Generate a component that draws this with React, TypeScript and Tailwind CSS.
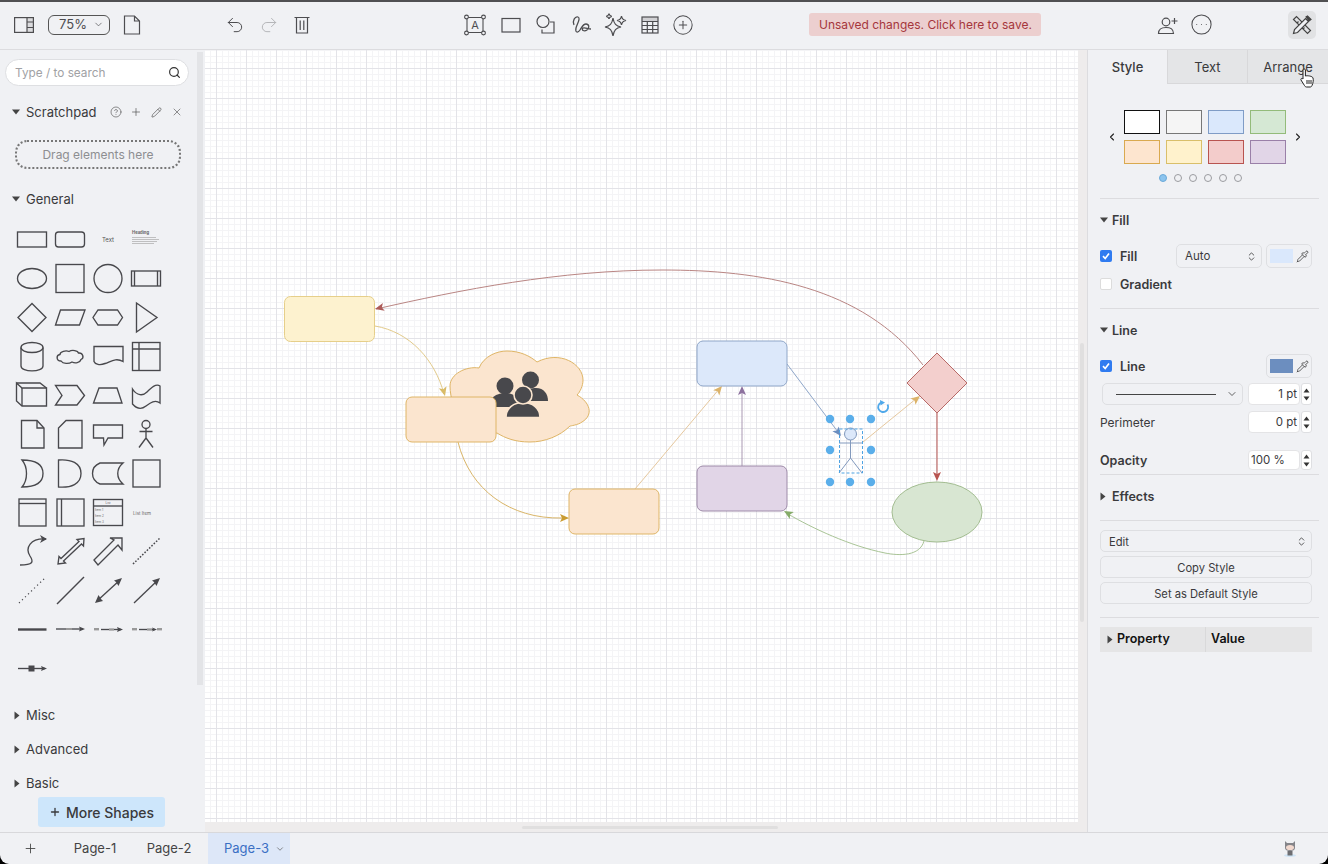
// App.tsx - diagram editor screen
import React from 'react'
import { ChevronDown, ChevronLeft, ChevronRight, ChevronsUpDown, CircleEllipsis, CircleHelp, CirclePlus, Pencil, Pipette, Plus, Redo2, Search, Undo2, X } from 'lucide-react'

const INK = '#48484c'

const TriDown = () => (
  <svg width="8" height="6" viewBox="0 0 8 6" className="shrink-0"><polygon points="0,0.5 8,0.5 4,5.5" fill="#444" /></svg>
)
const TriRight = () => (
  <svg width="6" height="9" viewBox="0 0 6 9" className="shrink-0"><polygon points="0.5,0.5 5.5,4.5 0.5,8.5" fill="#444" /></svg>
)

const Check = ({ on }: { on: boolean }) =>
  on ? (
    <div className="w-3 h-3 rounded-[2px] bg-[#2f7bf0] flex items-center justify-center">
      <svg width="10" height="10" viewBox="0 0 10 10"><path d="M2 5.2 L4.2 7.5 L8 2.6" fill="none" stroke="#fff" strokeWidth="1.7" /></svg>
    </div>
  ) : (
    <div className="w-3 h-3 rounded-[2px] bg-white border border-[#dcdcdc]" />
  )

const Stepper = () => (
  <div className="w-[11px] h-full ml-px border border-[#dedfe2] rounded-[3px] bg-white flex flex-col items-center justify-center gap-[3px]">
    <svg width="7" height="5" viewBox="0 0 7 5"><polygon points="3.5,0.5 6.5,4.5 0.5,4.5" fill="#333" /></svg>
    <svg width="7" height="5" viewBox="0 0 7 5"><polygon points="0.5,0.5 6.5,0.5 3.5,4.5" fill="#333" /></svg>
  </div>
)

const ColorBox = ({ color }: { color: string }) => (
  <div className="w-[46px] h-6 border border-[#dedfe2] rounded-[5px] flex items-center pl-[3px] gap-[3px]">
    <div className="w-[23px] h-[14px]" style={{ background: color }} />
    <Pipette size={13} strokeWidth={1.4} color="#333" />
  </div>
)

const Header = ({ label }: { label: string }) => (
  <div className="h-[22px] flex items-center gap-1 text-[12.5px] font-semibold text-[#3a3a3c]">
    <TriDown />
    <span className="pt-[2px]">{label}</span>
  </div>
)

const SideSection = ({ label }: { label: string }) => (
  <div className="h-[22px] flex items-center pl-[14px] gap-[6px] text-[13px] text-[#3a3a3c]">
    <TriRight />
    <span className="pt-[2px]">{label}</span>
  </div>
)

// palette tiles, 38x39 each, centred on 19,19.5
const tiles: React.ReactNode[] = [
  <rect x="4.5" y="12" width="29" height="15" />,
  <rect x="4.5" y="12" width="29" height="15" rx="3" />,
  <text x="19" y="21.5" textAnchor="middle" fontSize="6" fill="#555" stroke="none">Text</text>,
  <g stroke="none" fill="#aaa">
    <text x="5" y="14" fontSize="4.2" fontWeight="700" fill="#666">Heading</text>
    <rect x="5" y="17" width="24" height="0.7" /><rect x="5" y="19" width="27" height="0.7" /><rect x="5" y="21" width="25" height="0.7" /><rect x="5" y="23" width="22" height="0.7" />
  </g>,
  <ellipse cx="19" cy="19.5" rx="14.5" ry="10" />,
  <rect x="5" y="5.5" width="28" height="28" />,
  <circle cx="19" cy="19.5" r="14" />,
  <g><rect x="4.5" y="12" width="29" height="15" /><path d="M7.5 12 V27 M30.5 12 V27" /></g>,
  <path d="M19 5.5 L33 19.5 L19 33.5 L5 19.5 Z" />,
  <path d="M9.5 12 H34 L28.5 27 H4.5 Z" />,
  <path d="M9 12 H28.5 L33.5 19.5 L28.5 27 H9 L4 19.5 Z" />,
  <path d="M9.5 5 L30 19.5 L9.5 34 Z" />,
  <g><path d="M8 10.5 V29 C8 35.5 30 35.5 30 29 V10.5" /><ellipse cx="19" cy="10.5" rx="11" ry="5" /></g>,
  <path d="M10 25 C5 25 5 19 9 18.5 C9 15.5 15 14 18 15.5 C21 13.5 27 14.5 27.5 17 C32 16.5 33.5 22 30 23.5 C29 27 24 27.5 21 26 C18 28 12 28 10 25 Z" transform="translate(0,-1)" />,
  <path d="M5 13 H34 V28 C27 24 22 28 16 30 C11 32 6 31 5 28 Z" transform="translate(0,-3.5)" />,
  <g><rect x="5.5" y="5.5" width="27.5" height="28" /><path d="M5.5 12 H33 M12 5.5 V33.5" /></g>,
  <g><path d="M3.5 10 L9 15 H33.5 V33 H9 L3.5 28 Z" transform="translate(0,-3)" /><path d="M9 12 V30 M3.5 7 H27 L33.5 12" /></g>,
  <path d="M4.5 9.5 H26 L33.5 19.5 L26 29 H4.5 L11 19.5 Z" />,
  <path d="M10 12 H28 L33 27 H4.5 Z" />,
  <path d="M5.5 14 C10 21 16 21 20 17 C24 13 29 8 33 11 V28 C28 24 23 28 19 31 C14 35 9 33 5.5 29 Z" transform="translate(0,-1)" />,
  <g><path d="M8.5 5.5 H24 L31 13 V33 H8.5 Z" /><path d="M24 5.5 V13 H31" /></g>,
  <path d="M15 5.5 H31 V33 H7.5 V13 Z" />,
  <path d="M4.5 10 H33.5 V23 H19 L15 30 L14.5 23 H4.5 Z" />,
  <g><circle cx="19" cy="9.5" r="4" /><path d="M19 13.5 V23 M12.5 16.5 H25.5 M19 23 L12 32.5 M19 23 L26 32.5" /></g>,
  <path d="M9 6 C20 6 30 9 30 19.5 C30 30 20 33 9 33 C15 26 15 13 9 6 Z" />,
  <path d="M7.5 6 V33 C20 34 30 30 30 19.5 C30 9 20 5 7.5 6 Z" />,
  <path d="M11 9 H34 C27 15 27 24 34 30 H11 C1 26 1 13 11 9 Z" />,
  <rect x="6" y="6" width="27" height="27" />,
  <g><rect x="6" y="6" width="27" height="27" /><path d="M6 10.5 H33" /></g>,
  <g><rect x="6" y="6" width="27" height="27" /><path d="M10.5 6 V33" /></g>,
  <g>
    <rect x="4.5" y="6.5" width="29" height="26" /><path d="M4.5 13 H33.5" />
    <g stroke="none" fill="#666" fontSize="3"><text x="19" y="11" textAnchor="middle">List</text><text x="6" y="18">Item 1</text><text x="6" y="24">Item 2</text><text x="6" y="30">Item 3</text></g>
  </g>,
  <text x="6" y="22" fontSize="4.5" fill="#666" stroke="none">List Item</text>,
  <g><path d="M7 33 C20 33 21 30 17 24 C12 16 17 6 33 7" /><polygon points="34,7 27,3 29,7 27,11" fill={INK} stroke="none" /></g>,
  <path d="M7 32 L8 24.5 L10 26.5 L28 9.5 L26 7.5 L33 6.5 L32.5 14 L30.5 12 L12.5 29 L14.5 31 Z" />,
  <path d="M5 28 L25 8 L21 6 L33 6 L33 18 L29 13 L9 33 Z" />,
  <path d="M6 32 L33 6" strokeDasharray="1.6 1.6" strokeWidth="1.5" />,
  <path d="M6 32 L33 6" strokeDasharray="1.2 3" strokeWidth="1.2" />,
  <path d="M6 33 L33 6" />,
  <g><path d="M8 30 L31 9" /><polygon points="33,7 29.5,15 27,11 25,9.5" fill={INK} stroke="none" /><polygon points="6,32 9.5,24 12,28 14,30" fill={INK} stroke="none" /></g>,
  <g><path d="M7 32 L31 9" /><polygon points="33,7 29.5,15 27,11 25,9.5" fill={INK} stroke="none" /></g>,
  <path d="M5 19.5 H33.5" strokeWidth="2.4" />,
  <g><path d="M5 19 H32" /><polygon points="34,19 28,16.5 29,19 28,21.5" fill={INK} stroke="none" /><rect x="15" y="18" width="6" height="2" fill="#999" stroke="none" /></g>,
  <g><path d="M12 19.5 H32" /><polygon points="34,19.5 28,17 29,19.5 28,22" fill={INK} stroke="none" /><rect x="5" y="18" width="5" height="2.4" fill="#999" stroke="none" /><rect x="20" y="18.5" width="5" height="2" fill="#999" stroke="none" /></g>,
  <g><path d="M12 19.5 H28" /><polygon points="30,19.5 25,17.5 26,19.5 25,21.5" fill={INK} stroke="none" /><rect x="5" y="18" width="5" height="2.4" fill="#999" stroke="none" /><rect x="20" y="18.5" width="5" height="2" fill="#999" stroke="none" /><rect x="30" y="18" width="5" height="2.4" fill="#999" stroke="none" /></g>,
  <g><path d="M5 19.5 H32" /><polygon points="34,19.5 28,17 29,19.5 28,22" fill={INK} stroke="none" /><rect x="15.5" y="16.5" width="6" height="6" fill={INK} stroke="none" /></g>,
]

// block arrow head with a notch, tip at x,y pointing along angle (degrees)
const Head = ({ x, y, a, c }: { x: number; y: number; a: number; c: string }) => (
  <polygon points="0,0 -9,-4 -7,0 -9,4" fill={c} transform={`translate(${x} ${y}) rotate(${a})`} />
)

const handles: [number, number][] = [[830, 419], [850, 419], [871, 419], [830, 450], [871, 450], [830, 482], [850, 482], [871, 482]]

const Diagram = () => (
  <svg viewBox="205 50 873 772" className="w-full h-full block" fill="none">
    {/* edges */}
    <path d="M923 365 C862 286 760 270 662 270 C560 270 460 290 376 309" stroke="#b98583" />
    <Head x={375} y={309} a={167} c="#ad5b59" />
    <path d="M375 326 C410 332 435 360 444 394" stroke="#e2ca8a" />
    <Head x={445} y={396} a={75} c="#d9bb68" />
    <path d="M458 442 C470 490 510 519 562 518" stroke="#d9b568" />
    <Head x={569} y={518} a={0} c="#c99b30" />
    <path d="M635 489 L720 388" stroke="#e6c89e" />
    <Head x={722} y={386} a={-50} c="#dcb36a" />
    <path d="M742 466 V390" stroke="#a998b2" />
    <Head x={742} y={386} a={-90} c="#8d719e" />
    <path d="M787 364 L838 432" stroke="#8ea6c9" />
    <Head x={841} y={436} a={53} c="#6c8ebf" />
    <path d="M863 442 L917 398" stroke="#e6c89e" />
    <Head x={920} y={396} a={-39} c="#dcb36a" />
    <path d="M937 413 V476" stroke="#b85450" />
    <Head x={937} y={481} a={90} c="#b85450" />
    <path d="M924 541 C920 556 900 556 885 553 C850 546 812 528 788 514" stroke="#a9c496" />
    <Head x={784} y={511} a={-150} c="#85ab69" />

    {/* nodes */}
    <rect x="284.5" y="296.5" width="90" height="45" rx="6" fill="#fdf2cf" stroke="#e6cf8a" />
    <path d="M450 386 C450 374 466 366 479 368 C484 356 497 351 507 351 C520 351 530 356 537 362 C560 350 583 364 583 380 C583 386 580 392 577 395 C590 402 594 415 582 422 C578 425 570 426 570 426 C560 436 545 442 530 442 C515 442 505 438 497 433 C470 440 450 410 450 386 Z" fill="#fbe5cf" stroke="#dfb566" />
    <g fill={INK}>
      <circle cx="530.5" cy="380" r="8.5" />
      <path d="M516 401 C516 392 528 388 536 388 C544 388 548 394 548 401 Z" />
      <circle cx="505" cy="386" r="8.5" />
      <path d="M488 407 C488 398 497 393 505 393 C513 393 522 398 522 407 Z" />
      <g stroke="#fbe5cf" strokeWidth="1.6">
        <path d="M506 417.5 C506 408 514 402.5 523 402.5 C532 402.5 540 408 540 417.5 Z" />
        <circle cx="523" cy="395" r="9" />
      </g>
    </g>
    <rect x="406" y="397" width="90" height="45" rx="6" fill="#fbe5cf" stroke="#dfb566" />
    <rect x="569" y="489" width="90" height="45" rx="6" fill="#fbe5cf" stroke="#dfb566" />
    <rect x="697" y="341" width="90" height="45" rx="6" fill="#dce8fa" stroke="#8fa6c8" />
    <rect x="697" y="466" width="90" height="45" rx="6" fill="#e1d5e7" stroke="#9d8aa8" />
    <path d="M937 353 L967 383 L937 413 L907 383 Z" fill="#f3cfcd" stroke="#b86a67" />
    <ellipse cx="937" cy="512" rx="45" ry="30" fill="#d8e6d2" stroke="#a3bd91" />

    {/* selected actor */}
    <g stroke="#8299bd">
      <circle cx="850.5" cy="434" r="6" fill="#dce8fa" />
      <path d="M850.5 440 V458 M839 443 H863 M850.5 458 L839 473 M850.5 458 L862 473" />
    </g>
    <rect x="839.5" y="429" width="23" height="44" stroke="#4fa3e3" strokeDasharray="3 2" />
    {handles.map(([x, y]) => (
      <circle key={`${x}-${y}`} cx={x} cy={y} r="4.2" fill="#5aaeea" />
    ))}
    <path d="M887.5 404.5 A5 5 0 1 1 881 402.5" stroke="#4fa8ea" strokeWidth="1.8" />
    <polygon points="880,400 885,402.5 880.5,405.5" fill="#4fa8ea" />
  </svg>
)

const swatches = [
  ['#ffffff', '#111111'], ['#f5f5f5', '#777777'], ['#dae8fc', '#7f9cc6'], ['#d5e8d4', '#93bb7a'],
  ['#fde5cf', '#d9a94f'], ['#fff2cc', '#d9bf6a'], ['#f3cccb', '#b85450'], ['#e1d5e7', '#9a80a8'],
]

const Toolbar = () => (
  <div className="h-12 shrink-0 flex items-center pl-[14px] pb-[2px] border-b border-[#dcdcdf] text-[#4d4d50]">
    <svg width="20" height="16" viewBox="0 0 20 16" fill="none" stroke="#4d4d50" strokeWidth="1.2">
      <rect x="0.6" y="0.6" width="18.8" height="14.8" /><path d="M13 0.6 V15.4 M13 5 H19.4 M13 10.5 H19.4" />
      <rect x="13" y="0.6" width="6.4" height="14.8" fill="#55555522" stroke="none" />
    </svg>
    <div className="ml-[14px] w-[62px] h-5 border border-[#555] rounded-[6px] flex items-center pl-[10px] gap-[6px] text-[13px]">
      <span>75%</span>
      <ChevronDown size={11} strokeWidth={1.5} />
    </div>
    <svg className="ml-[13px]" width="18" height="20" viewBox="0 0 18 20" fill="none" stroke="#4d4d50" strokeWidth="1.2">
      <path d="M1.5 1 H11.5 L16.5 6 V19 H1.5 Z M11.5 1 V6 H16.5" />
    </svg>
    <Undo2 className="ml-[84px]" size={20} strokeWidth={1.2} />
    <Redo2 className="ml-[14px]" size={20} strokeWidth={1.2} color="#b5b6b9" />
    <svg className="ml-[15px]" width="16" height="18" viewBox="0 0 16 18" fill="none" stroke="#4d4d50" strokeWidth="1.2">
      <path d="M0.5 1.5 H15.5 M2.5 1.5 V17 H13.5 V1.5 M6.2 4.5 V14 M9.8 4.5 V14" />
    </svg>
    <div className="ml-[153px] flex items-center gap-[10.5px]">
      <svg width="24" height="24" viewBox="0 0 24 24" fill="none" stroke="#4d4d50" strokeWidth="1.1">
        <path d="M4 4.5 H20 M4 19.5 H20 M4 4.5 V19.5 M20 4.5 V19.5" />
        {[[3.5, 4], [20.5, 4], [3.5, 20], [20.5, 20]].map(([x, y]) => <circle key={`${x}${y}`} cx={x} cy={y} r="1.9" fill="#f0f1f4" />)}
        <text x="12" y="16" textAnchor="middle" fontSize="11" fill="#4d4d50" stroke="none">A</text>
      </svg>
      <svg className="ml-px" width="24" height="24" viewBox="0 0 24 24" fill="none" stroke="#4d4d50" strokeWidth="1.2"><rect x="3" y="5.5" width="18" height="13.5" /></svg>
      <svg className="ml-px" width="24" height="24" viewBox="0 0 24 24" fill="none" stroke="#4d4d50" strokeWidth="1.2">
        <circle cx="9" cy="8.5" r="6" /><path d="M16 9 H20 V20 H8 V16.5" />
      </svg>
      <svg width="24" height="24" viewBox="0 0 24 24" fill="none" stroke="#4d4d50" strokeWidth="1.3">
        <path d="M5 12 C3 8 6 3 9 4 C12 5 8 11 7 15 C6 20 9 20 11 17 C13 14 14 11 17 11 C20 11 21 15 18 17 C15 19 12 17 14 15 C16 14 19 16 22 16" />
      </svg>
      <svg width="24" height="24" viewBox="0 0 24 24" fill="none" stroke="#4d4d50" strokeWidth="1.2">
        <path d="M10 7 C11 13 13 15 18 16 C13 17 11 19 10 25 C9 19 7 17 2 16 C7 15 9 13 10 7 Z" transform="translate(0,-2)" />
        <path d="M18.5 3 C19 6 20 7 23 7.5 C20 8 19 9 18.5 12 C18 9 17 8 14 7.5 C17 7 18 6 18.5 3 Z" />
        <path d="M6 0.5 C6.3 2.3 7 3 8.8 3.3 C7 3.6 6.3 4.3 6 6 C5.7 4.3 5 3.6 3.2 3.3 C5 3 5.7 2.3 6 0.5 Z" />
      </svg>
      <svg width="24" height="24" viewBox="0 0 24 24" fill="none" stroke="#4d4d50" strokeWidth="1.2">
        <rect x="4" y="4" width="16" height="16" /><path d="M4 8.5 H20 M4 12.5 H20 M4 16.5 H20 M9.3 8.5 V20 M14.7 8.5 V20" /><rect x="4" y="4" width="16" height="4.5" fill="#55555533" stroke="none" />
      </svg>
      <CirclePlus size={22} strokeWidth={1.1} />
    </div>
    <div className="ml-[115px] w-[232px] h-[23px] bg-[#eccfcf] rounded-[3px] flex items-center pl-[10px] text-[12px] text-[#a5363c] whitespace-nowrap">
      Unsaved changes. Click here to save.
    </div>
    <svg className="ml-[115px]" width="24" height="24" viewBox="0 0 24 24" fill="none" stroke="#4d4d50" strokeWidth="1.2">
      <circle cx="10" cy="9" r="3.8" /><path d="M2.5 20.5 C2.5 16 6 14.5 10 14.5 C14 14.5 17.5 16 17.5 20.5 Z M18.5 5 V11 M15.5 8 H21.5" />
    </svg>
    <CircleEllipsis className="ml-[10px]" size={23} strokeWidth={1.1} />
    <div className="ml-[75px] w-7 h-7 rounded-[5px] bg-[#e1e2e4] flex items-center justify-center">
      <svg width="20" height="20" viewBox="0 0 20 20" fill="none" stroke="#444" strokeWidth="1.2">
        <path d="M1.5 4.5 L4.5 1.5 L18.5 15.5 L15.5 18.5 Z M5 8 L6.5 6.5 M8 11 L9.5 9.5 M11 14 L12.5 12.5" />
        <path d="M1.5 18.5 L2.5 14.5 L13.5 3.5 L16.5 6.5 L5.5 17.5 Z" fill="#f0f1f4" />
        <path d="M14 2 L15.5 1 L19 4.5 L17 6 Z" fill="#444" />
      </svg>
    </div>
  </div>
)

const Sidebar = () => (
  <div className="relative w-[205px] shrink-0 flex flex-col">
    <div className="absolute left-[197px] top-[2px] w-[6px] h-[633px] bg-[#e3e4e7]" />
    <div className="mt-[9px] ml-[5px] w-[184px] h-[27px] bg-white border border-[#dedfe2] rounded-full flex items-center justify-between pl-[9px] pr-[7px] text-[11.8px] text-[#a0a1a4]">
      <span className="pt-[2px]">Type / to search</span>
      <Search size={13} strokeWidth={2.2} color="#333" />
    </div>
    <div className="mt-[15px] h-[22px] flex items-center pl-[12px] text-[13px] text-[#3a3a3c]">
      <TriDown />
      <span className="ml-[6px] pt-[2px]">Scratchpad</span>
      <CircleHelp className="ml-[13px]" size={12} strokeWidth={1.3} color="#555" />
      <Plus className="ml-[8px]" size={12} strokeWidth={1.4} color="#555" />
      <Pencil className="ml-[9px]" size={11} strokeWidth={1.5} color="#555" />
      <X className="ml-[9px]" size={12} strokeWidth={1.3} color="#555" />
    </div>
    <div className="mt-[17px] ml-[15px] w-[166px] h-[29px] border-2 border-dotted border-[#777] rounded-[12px] flex items-center justify-center text-[12px] text-[#8d8e91]">
      <span className="pt-px">Drag elements here</span>
    </div>
    <div className="mt-[19px] h-[22px] flex items-center pl-[12px] gap-[6px] text-[13px] text-[#3a3a3c]">
      <TriDown />
      <span className="pt-[2px]">General</span>
    </div>
    <div className="mt-[10px] ml-[13px] grid grid-cols-[repeat(4,38px)] auto-rows-[39px]">
      {tiles.map((t, i) => (
        <svg key={i} width="38" height="39" viewBox="0 0 38 39" fill="none" stroke={INK} strokeWidth="1.35">{t}</svg>
      ))}
    </div>
    <div className="mt-4 flex flex-col gap-3">
      <SideSection label="Misc" />
      <SideSection label="Advanced" />
      <SideSection label="Basic" />
    </div>
    <div className="mt-[3px] ml-[38px] w-[127px] h-[30px] bg-[#cde6fb] rounded-[3px] flex items-center justify-center gap-[5px] text-[14px] font-medium text-[#3a3a3c]">
      <Plus size={12} strokeWidth={2.6} />
      <span>More Shapes</span>
    </div>
  </div>
)

const Canvas = () => (
  <div className="flex-1 min-w-0 flex flex-col bg-[#eeecec]">
    <div className="flex-1 min-h-0 flex">
      <div className="w-[873px] bg-white bg-[linear-gradient(#e3e3e8_1px,transparent_1px),linear-gradient(90deg,#e3e3e8_1px,transparent_1px),linear-gradient(#f4f4f6_1px,transparent_1px),linear-gradient(90deg,#f4f4f6_1px,transparent_1px)] bg-[size:30px_30px,30px_30px,6px_6px,6px_6px] bg-[position:11px_18px,11px_18px,5px_0px,5px_0px]">
        <Diagram />
      </div>
      <div className="flex-1 pt-[293px] pl-[2px]">
        <div className="w-[4px] h-[279px] bg-[#e0dfdf] rounded-full" />
      </div>
    </div>
    <div className="h-[10px] shrink-0 flex items-center pl-[317px]">
      <div className="w-[256px] h-[3px] bg-[#e0dfdf] rounded-full" />
    </div>
  </div>
)

const Panel = () => (
  <div className="w-[241px] shrink-0 border-l border-[#dcdcdf] flex flex-col text-[#3a3a3c]">
    <div className="h-[34px] flex text-[13px]">
      <div className="w-[79px] flex items-center justify-center font-medium pt-[2px]">Style</div>
      <div className="w-[80px] flex items-center justify-center bg-[#e4e5e7] border-l border-b border-[#d8d8da] pt-[2px]">Text</div>
      <div className="flex-1 flex items-center justify-center bg-[#e4e5e7] border-l border-b border-[#d8d8da] pt-[2px]">Arrange</div>
    </div>
    <div className="ml-3 mr-[9px] h-[115px] border-b border-[#dcdcdf]">
      <div className="pt-[26px] pl-[6px] flex items-center">
        <ChevronLeft size={12} strokeWidth={2.2} color="#222" />
        <div className="ml-[6px] grid grid-cols-[repeat(4,36px)] gap-x-[6px] gap-y-[6px]">
          {swatches.map(([bg, line]) => (
            <div key={bg} className="h-6 border" style={{ background: bg, borderColor: line }} />
          ))}
        </div>
        <ChevronRight className="ml-[6px]" size={12} strokeWidth={2.2} color="#222" />
      </div>
      <div className="mt-[10px] ml-[59px] flex gap-[7px]">
        <div className="w-2 h-2 rounded-full bg-[#8cc4ee] border border-[#6aa9d8]" />
        {[1, 2, 3, 4, 5].map((i) => (
          <div key={i} className="w-2 h-2 rounded-full border border-[#9b9ca0]" />
        ))}
      </div>
    </div>
    {/* Fill */}
    <div className="ml-3 mr-[9px] pr-[7px] h-[110px] border-b border-[#dcdcdf] pt-[10px]">
      <Header label="Fill" />
      <div className="mt-[13px] h-6 flex items-center text-[12.5px] font-semibold">
        <Check on />
        <span className="ml-2 w-[56px] pt-[2px]">Fill</span>
        <div className="w-[86px] h-6 border border-[#dedfe2] rounded-[5px] flex items-center justify-between pl-2 pr-1 font-normal text-[11.5px]">
          <span className="pt-[2px]">Auto</span>
          <ChevronsUpDown size={11} strokeWidth={1.6} color="#222" />
        </div>
        <div className="ml-1"><ColorBox color="#dae8fc" /></div>
      </div>
      <div className="mt-2 h-4 flex items-center text-[12.5px] font-semibold">
        <Check on={false} />
        <span className="ml-2 pt-[2px]">Gradient</span>
      </div>
    </div>
    {/* Line */}
    <div className="ml-3 mr-[9px] pr-[7px] h-[166px] border-b border-[#dcdcdf] pt-[10px]">
      <Header label="Line" />
      <div className="mt-[13px] h-6 flex items-center justify-between text-[12.5px] font-semibold">
        <div className="flex items-center">
          <Check on />
          <span className="ml-2 pt-[2px]">Line</span>
        </div>
        <ColorBox color="#6c8ebf" />
      </div>
      <div className="mt-[5px] h-[22px] flex items-center">
        <div className="ml-[2px] w-[141px] h-[22px] border border-[#dedfe2] rounded-[5px] flex items-center pl-[13px] pr-[4px] justify-between">
          <div className="w-[100px] h-px bg-[#444]" />
          <ChevronDown size={12} strokeWidth={1.5} color="#333" />
        </div>
        <div className="ml-[5px] w-[52px] h-[22px] bg-white border border-[#e4e4e6] rounded-[4px] flex items-center justify-end pr-[2px] pt-[2px] text-[11.5px]">1 pt</div>
        <Stepper />
      </div>
      <div className="mt-[6px] h-[22px] flex items-center justify-between">
        <span className="text-[12px] pt-[2px]">Perimeter</span>
        <div className="flex h-full">
          <div className="w-[52px] bg-white border border-[#e4e4e6] rounded-[4px] flex items-center justify-end pr-[2px] pt-[2px] text-[11.5px]">0 pt</div>
          <Stepper />
        </div>
      </div>
      <div className="mt-[17px] h-5 flex items-center justify-between">
        <span className="text-[12.5px] font-semibold pt-[2px]">Opacity</span>
        <div className="flex h-full">
          <div className="w-[52px] bg-white border border-[#e4e4e6] rounded-[4px] flex items-center pl-[2px] pt-[2px] text-[11.5px]">100 %</div>
          <Stepper />
        </div>
      </div>
    </div>
    {/* Effects */}
    <div className="ml-3 mr-[9px] h-[46px] border-b border-[#dcdcdf] pt-[10px]">
      <div className="h-[22px] flex items-center gap-[6px] text-[12.5px] font-semibold">
        <TriRight />
        <span className="pt-[2px]">Effects</span>
      </div>
    </div>
    {/* Style actions */}
    <div className="ml-3 mr-[9px] pr-[7px] h-[97px] border-b border-[#dcdcdf] pt-[9px] flex flex-col gap-1 text-[11.2px]">
      <div className="h-[22px] border border-[#dedfe2] rounded-[5px] flex items-center justify-between pl-2 pr-1">
        <span className="pt-[2px]">Edit</span>
        <ChevronsUpDown size={11} strokeWidth={1.6} color="#222" />
      </div>
      <div className="h-[22px] border border-[#dedfe2] rounded-[5px] flex items-center justify-center pt-[2px]">Copy Style</div>
      <div className="h-[22px] border border-[#dedfe2] rounded-[5px] flex items-center justify-center pt-[2px]">Set as Default Style</div>
    </div>
    <div className="mt-[9px] ml-3 w-[212px] h-[25px] bg-[#e5e5e6] flex items-center text-[12.5px] font-semibold text-[#111]">
      <div className="w-[106px] h-full flex items-center pl-[7px] gap-1 border-r border-[#d9d9da]">
        <TriRight />
        <span>Property</span>
      </div>
      <span className="ml-[5px]">Value</span>
    </div>
  </div>
)

const TabBar = () => (
  <div className="h-8 shrink-0 border-t border-[#d8d8db] flex items-stretch text-[13px] text-[#444]">
    <div className="w-[60px] flex items-center justify-center"><Plus size={15} strokeWidth={1.4} /></div>
    <div className="w-[70px] flex items-center justify-center">Page-1</div>
    <div className="w-[78px] flex items-center justify-center">Page-2</div>
    <div className="w-[82px] bg-[#dde7f8] text-[#3a6fc4] flex items-center pl-[16px] gap-[6px]">
      <span>Page-3</span>
      <ChevronDown size={10} strokeWidth={1.6} color="#555" />
    </div>
    <div className="ml-auto mr-[30px] flex items-center">
      <svg width="16" height="18" viewBox="0 0 16 18">
        <ellipse cx="8" cy="15.5" rx="6" ry="1.5" fill="#cfe4f5" />
        <path d="M3 1 L5 3 H11 L13 1 V8 C13 10 11 11 8 11 C5 11 3 10 3 8 Z" fill="#85858a" />
        <ellipse cx="8" cy="7.5" rx="4" ry="2.6" fill="#f2d9cf" />
        <rect x="5.5" y="11" width="5" height="4.5" fill="#6d6e72" />
      </svg>
    </div>
  </div>
)

const App: React.FC = () => {
  return (
    <div className="w-[1328px] h-[864px] bg-black font-['Inter','Liberation_Sans',sans-serif] relative overflow-hidden">
      <div className="w-full h-full bg-[#f0f1f4] border-t-2 border-[#505052] rounded-b-[9px] flex flex-col overflow-hidden">
        <Toolbar />
        <div className="flex-1 min-h-0 flex">
          <Sidebar />
          <Canvas />
          <Panel />
        </div>
        <TabBar />
      </div>
      {/* mouse pointer over the Arrange tab */}
      <svg className="absolute left-[1300px] top-[68px]" width="15" height="20" viewBox="0 0 15 20" fill="#fff" stroke="#222" strokeWidth="1">
        <path d="M3 2 C3 .6 5.4 .6 5.4 2 V8 C7 7.4 12.5 8 13 10 C13.6 12 13.2 15 12 17.5 C11.6 18.6 11 19 10 19 H6.5 C5.5 19 5 18.4 4.4 17.4 L1 12 C.4 10.8 1.8 9.8 3 11 Z" />
        <path d="M7 12 V16 M9 12 V16 M11 12 V16" />
      </svg>
    </div>
  )
}

export default App
